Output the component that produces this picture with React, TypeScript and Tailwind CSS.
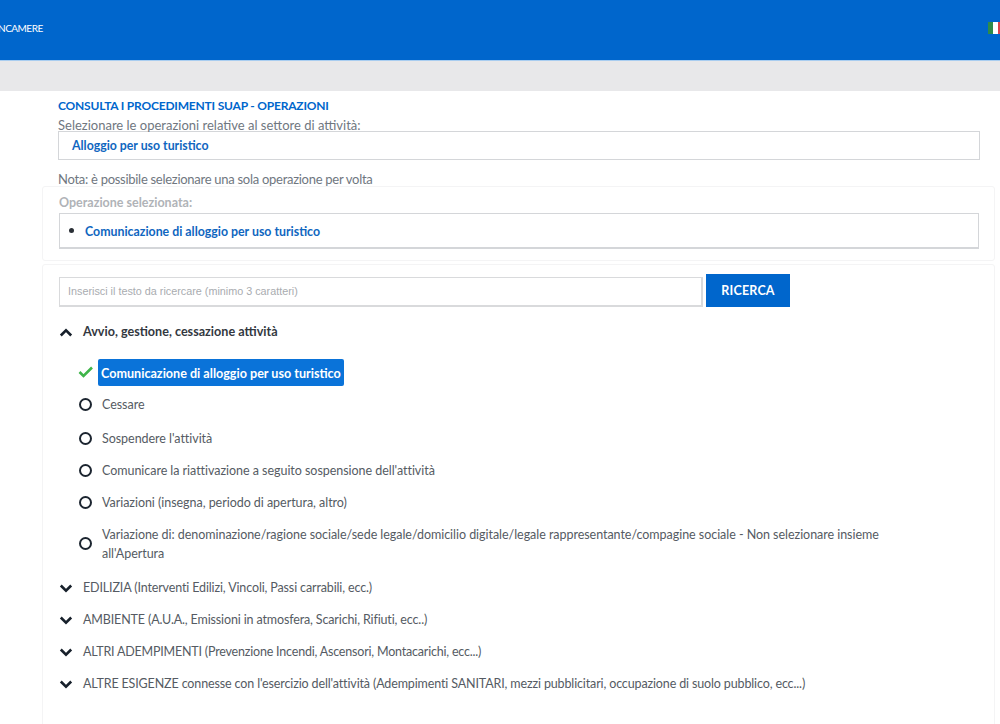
import React from "react";

const font = { fontFamily: "Lato, 'Noto Sans', sans-serif" };

function Chevron({ up }: { up?: boolean }) {
  return (
    <svg width="14" height="9" viewBox="0 0 14 9" className="shrink-0" fill="none">
      <path d={up ? "M1.8 7.5 L7 2.3 L12.2 7.5" : "M1.8 1.5 L7 6.7 L12.2 1.5"} stroke="#17202b" strokeWidth="2.6" />
    </svg>
  );
}

function Circle() {
  return <span className="block w-[13px] h-[13px] shrink-0 rounded-full border-2 border-[#1c2530]" />;
}

function Op({ children, h }: { children: React.ReactNode; h: string }) {
  return (
    <div className={`flex items-center gap-[10px] pl-[36px] ${h}`}>
      <Circle />
      <span className="text-[12.5px] leading-[19px] text-[#555b63] tracking-[-0.04px]">{children}</span>
    </div>
  );
}

function Section({ children, tight }: { children: React.ReactNode; tight?: boolean }) {
  return (
    <div className="flex items-center gap-[10px] h-[32px] pl-[16px]">
      <Chevron />
      <span className={`text-[12.5px] text-[#555b63] whitespace-nowrap ${tight ? "tracking-[-0.2px]" : "tracking-[-0.135px]"}`}>{children}</span>
    </div>
  );
}

export default function App() {
  return (
    <div className="w-[1000px] h-[724px] overflow-hidden bg-white" style={font}>
      <header className="flex items-center justify-between h-[61px] pb-[5px] bg-[#0066cc] border-b border-[#a9cdf0]">
        <span className="-ml-[2px] text-[10px] leading-[12px] text-white whitespace-nowrap tracking-[-0.5px]">NCAMERE</span>
        <span className="flex w-[15px] h-[12px] -mr-[3px] shrink-0">
          <span className="w-[5px] bg-[#2e8b4a]" />
          <span className="w-[5px] bg-white" />
          <span className="w-[5px] bg-[#d8434c]" />
        </span>
      </header>
      <div className="h-[30px] bg-[#e8e8ea]" />

      <div className="pl-[58px] pr-[20px] pt-[7px]">
        <h1 className="text-[12px] leading-[16px] font-bold text-[#0066cc] tracking-[-0.2px]">CONSULTA I PROCEDIMENTI SUAP - OPERAZIONI</h1>
        <p className="text-[13px] leading-[18px] text-[#70777f] mt-[2px]">Selezionare le operazioni relative al settore di attività:</p>
        <div className="h-[29px] -mt-[3px] flex items-center pl-[13px] pt-[1px] border border-[#d4d6d9]">
          <span className="font-bold text-[12.3px] text-[#0f66c0] pt-[1px]">Alloggio per uso turistico</span>
        </div>
        <p className="mt-[10px] text-[13px] leading-[18px] text-[#70777f] tracking-[-0.28px]">Nota: è possibile selezionare una sola operazione per volta</p>
      </div>

      <div className="ml-[42px] mr-[5px] h-[75px] -mt-[2px] pl-[16px] pr-[15px] pt-[7px] border border-[#f4f4f5] rounded-[3px]">
        <p className="text-[12.5px] leading-[18px] font-bold text-[#b0b3b7]">Operazione selezionata:</p>
        <div className="mt-[1px] h-[36px] flex items-center pl-[9px] border border-[#d4d6d9] border-b-2">
          <span className="w-[5px] h-[5px] rounded-full bg-[#2a2f36] mr-[11px]" />
          <span className="text-[12.35px] font-bold text-[#0f66c0] pt-[4px]">Comunicazione di alloggio per uso turistico</span>
        </div>
      </div>

      <div className="ml-[42px] mr-[5px] h-[480px] mt-[3px] border border-[#f4f4f5] rounded-[3px]">
        <div className="flex pl-[16px] pt-[9px] h-[49px]">
          <div className="w-[644px] h-[30px] mt-[3px] flex items-center pl-[8px] border-2 border-[#d9dadc] border-t-[1px] border-l-[1px]">
            <span className="text-[10.8px] text-[#a9acb0] whitespace-nowrap" style={{ fontFamily: "'Liberation Sans', sans-serif" }}>
              Inserisci il testo da ricercare (minimo 3 caratteri)
            </span>
          </div>
          <button className="ml-[3px] w-[84px] h-[33px] pt-[2px] bg-[#0066cc] text-white text-[12.5px] font-bold tracking-[0.2px]">RICERCA</button>
        </div>

        <div className="flex items-center gap-[10px] h-[32px] mt-[2px] pl-[16px]">
          <Chevron up />
          <span className="text-[12.6px] font-bold text-[#33383f]">Avvio, gestione, cessazione attività</span>
        </div>

        <div className="flex items-center h-[28px] mt-[10px] pl-[35px]">
          <svg width="16" height="12" viewBox="0 0 16 12" fill="none" className="shrink-0">
            <path d="M1.5 6 L5.5 10 L14 1.5" stroke="#3fb54a" strokeWidth="2.6" />
          </svg>
          <span className="ml-[4px] h-[27px] px-[3px] pt-[4px] flex items-center rounded-[2px] bg-[#0a73d9] text-white text-[12.6px] font-bold whitespace-nowrap">
            Comunicazione di alloggio per uso turistico
          </span>
        </div>

        <Op h="h-[32px] mt-[2px]">Cessare</Op>
        <Op h="h-[34px] mt-[1px]">Sospendere l'attività</Op>
        <Op h="h-[31px]">Comunicare la riattivazione a seguito sospensione dell'attività</Op>
        <Op h="h-[32px]">Variazioni (insegna, periodo di apertura, altro)</Op>
        <Op h="h-[50px] mb-[4px]">
          <span className="block w-[790px] pt-[2px]">
            Variazione di: denominazione/ragione sociale/sede legale/domicilio digitale/legale rappresentante/compagine sociale - Non selezionare insieme all'Apertura
          </span>
        </Op>

        <Section>EDILIZIA (Interventi Edilizi, Vincoli, Passi carrabili, ecc.)</Section>
        <Section>AMBIENTE (A.U.A., Emissioni in atmosfera, Scarichi, Rifiuti, ecc..)</Section>
        <Section tight>ALTRI ADEMPIMENTI (Prevenzione Incendi, Ascensori, Montacarichi, ecc...)</Section>
        <Section>ALTRE ESIGENZE connesse con l'esercizio dell'attività (Adempimenti SANITARI, mezzi pubblicitari, occupazione di suolo pubblico, ecc...)</Section>
      </div>
    </div>
  );
}
